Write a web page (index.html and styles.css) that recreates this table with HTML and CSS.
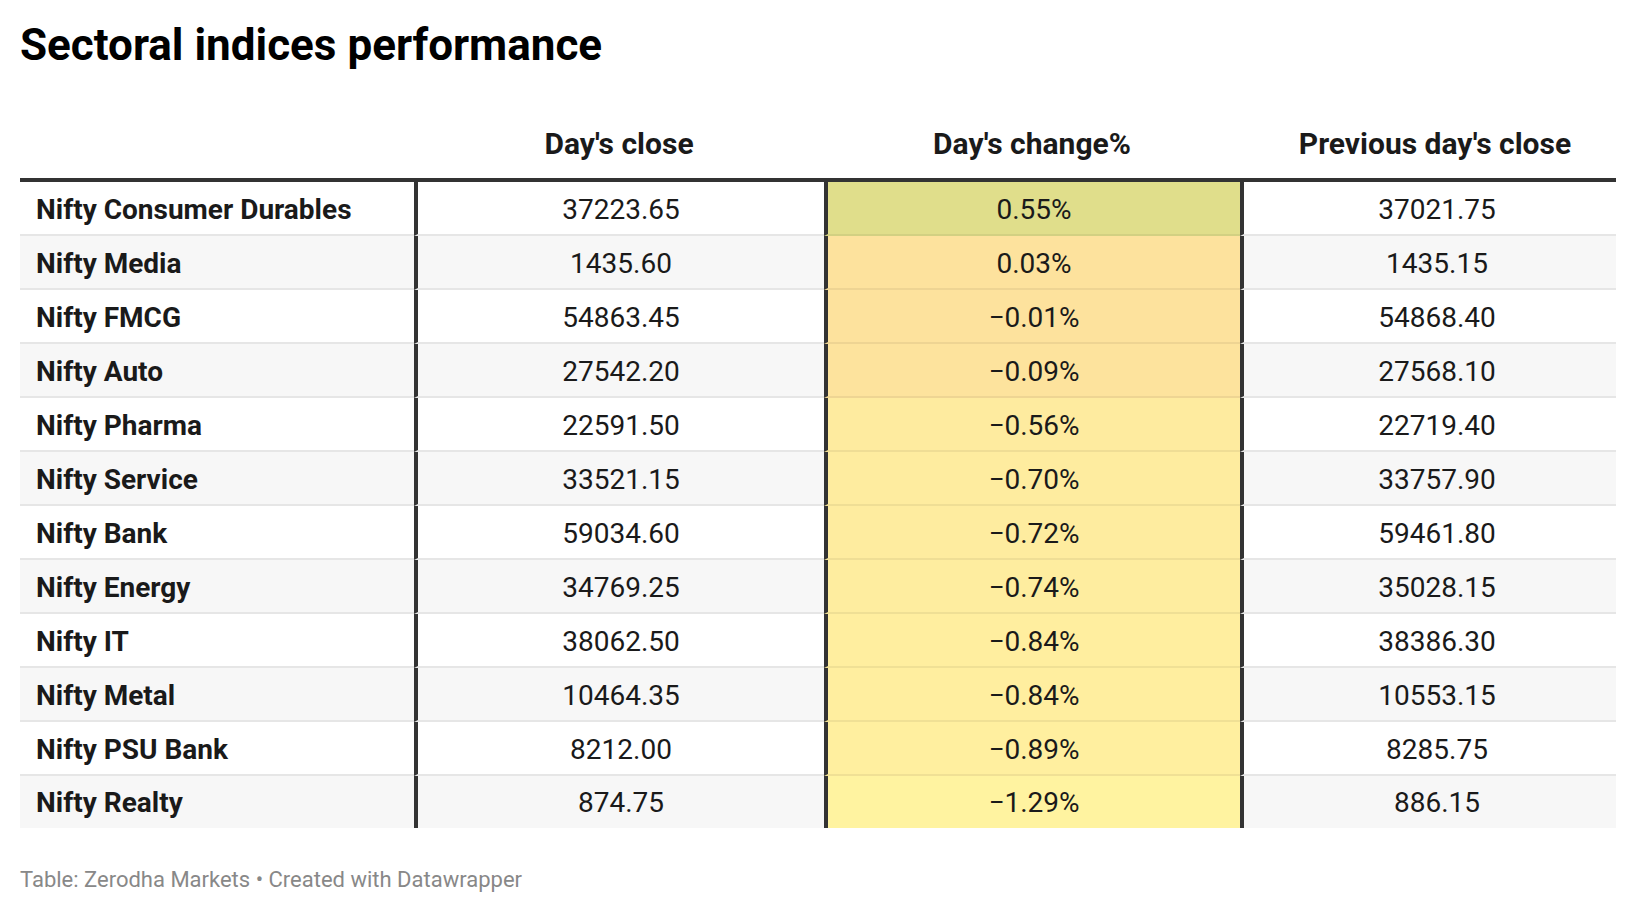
FILE: index.html
```html
<!DOCTYPE html>
<html lang="en">
<head>
<meta charset="utf-8">
<title>Sectoral indices performance</title>
<link rel="stylesheet" href="styles.css">
</head>
<body>
<div class="chart">
  <h1 class="title">Sectoral indices performance</h1>
  <div class="table">
    <div class="row head">
      <div class="cell name"></div>
      <div class="cell">Day's close</div>
      <div class="cell">Day's change%</div>
      <div class="cell prev">Previous day's close</div>
    </div>
    <div class="row">
      <div class="cell name">Nifty Consumer Durables</div>
      <div class="cell num">37223.65</div>
      <div class="cell num chg" style="background:#e0de8b">0.55%</div>
      <div class="cell num prev">37021.75</div>
    </div>
    <div class="row alt">
      <div class="cell name">Nifty Media</div>
      <div class="cell num">1435.60</div>
      <div class="cell num chg" style="background:#fde29d">0.03%</div>
      <div class="cell num prev">1435.15</div>
    </div>
    <div class="row">
      <div class="cell name">Nifty FMCG</div>
      <div class="cell num">54863.45</div>
      <div class="cell num chg" style="background:#fde29d">−0.01%</div>
      <div class="cell num prev">54868.40</div>
    </div>
    <div class="row alt">
      <div class="cell name">Nifty Auto</div>
      <div class="cell num">27542.20</div>
      <div class="cell num chg" style="background:#fde39d">−0.09%</div>
      <div class="cell num prev">27568.10</div>
    </div>
    <div class="row">
      <div class="cell name">Nifty Pharma</div>
      <div class="cell num">22591.50</div>
      <div class="cell num chg" style="background:#feeb9f">−0.56%</div>
      <div class="cell num prev">22719.40</div>
    </div>
    <div class="row alt">
      <div class="cell name">Nifty Service</div>
      <div class="cell num">33521.15</div>
      <div class="cell num chg" style="background:#feec9f">−0.70%</div>
      <div class="cell num prev">33757.90</div>
    </div>
    <div class="row">
      <div class="cell name">Nifty Bank</div>
      <div class="cell num">59034.60</div>
      <div class="cell num chg" style="background:#feec9f">−0.72%</div>
      <div class="cell num prev">59461.80</div>
    </div>
    <div class="row alt">
      <div class="cell name">Nifty Energy</div>
      <div class="cell num">34769.25</div>
      <div class="cell num chg" style="background:#feed9f">−0.74%</div>
      <div class="cell num prev">35028.15</div>
    </div>
    <div class="row">
      <div class="cell name">Nifty IT</div>
      <div class="cell num">38062.50</div>
      <div class="cell num chg" style="background:#ffee9f">−0.84%</div>
      <div class="cell num prev">38386.30</div>
    </div>
    <div class="row alt">
      <div class="cell name">Nifty Metal</div>
      <div class="cell num">10464.35</div>
      <div class="cell num chg" style="background:#ffee9f">−0.84%</div>
      <div class="cell num prev">10553.15</div>
    </div>
    <div class="row">
      <div class="cell name">Nifty PSU Bank</div>
      <div class="cell num">8212.00</div>
      <div class="cell num chg" style="background:#ffef9f">−0.89%</div>
      <div class="cell num prev">8285.75</div>
    </div>
    <div class="row alt last">
      <div class="cell name">Nifty Realty</div>
      <div class="cell num">874.75</div>
      <div class="cell num chg" style="background:#fff3a0">−1.29%</div>
      <div class="cell num prev">886.15</div>
    </div>
  </div>
  <div class="footer">Table: Zerodha Markets • Created with Datawrapper</div>
</div>
</body>
</html>
```
FILE: styles.css
```css
html, body {
  margin: 0;
  padding: 0;
  background: #ffffff;
}

body {
  font-family: Roboto, "Liberation Sans", Arial, sans-serif;
  color: #1a1a1a;
}

.chart {
  padding: 19px 20px 0 20px;
  display: flex;
  flex-direction: column;
}

.title {
  margin: 0;
  font-size: 44px;
  line-height: 1.2;
  font-weight: 700;
  color: #000000;
}

.table {
  display: flex;
  flex-direction: column;
  width: 1596px;
}

.row {
  display: grid;
  grid-template-columns: 394px 410px 416px 376px;
  height: 54px;
  box-sizing: border-box;
}

.row.alt {
  background: #f7f7f7;
}

.row.last {
  height: 52px;
}

.row.head {
  height: 110px;
  border-bottom: 4px solid #333333;
  background: transparent;
}

.cell {
  box-sizing: border-box;
  display: flex;
  align-items: center;
  justify-content: center;
  padding-top: 4px;
  font-size: 28px;
  white-space: nowrap;
  border-bottom: 2px solid #e6e6e6;
}

.row.last .cell {
  border-bottom: none;
  padding-top: 2px;
}

.row .cell + .cell {
  border-left: 4px solid #333333;
}

.row.head .cell {
  align-items: flex-end;
  padding-top: 0;
  padding-bottom: 17px;
  font-size: 30px;
  font-weight: 700;
  border: none;
  color: #1a1a1a;
}

.cell.name {
  justify-content: flex-start;
  padding-left: 16px;
  font-weight: 700;
}

.cell.prev {
  padding-left: 14px;
}

.cell.chg {
  border-bottom-color: rgba(0, 0, 0, 0.06);
}

.footer {
  margin-top: 39px;
  font-size: 22px;
  line-height: 1.2;
  color: #888888;
}
```
